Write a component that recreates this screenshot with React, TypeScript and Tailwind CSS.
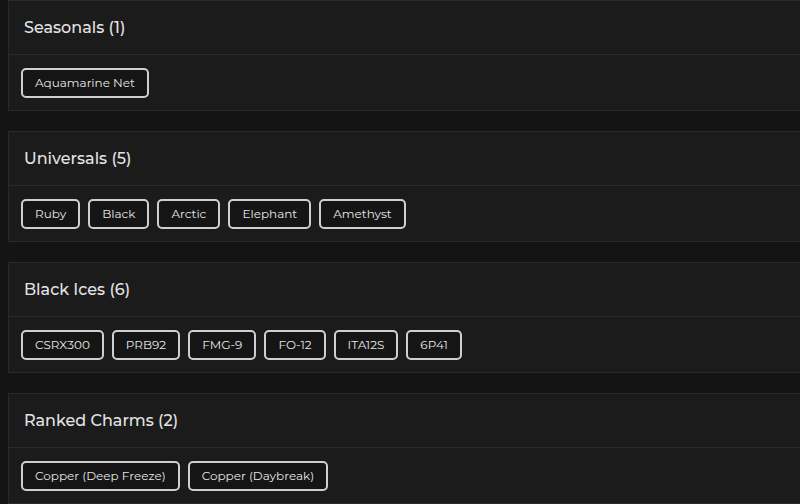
import React from "react";

const sections: { title: string; items: string[] }[] = [
  { title: "Seasonals (1)", items: ["Aquamarine Net"] },
  { title: "Universals (5)", items: ["Ruby", "Black", "Arctic", "Elephant", "Amethyst"] },
  { title: "Black Ices (6)", items: ["CSRX300", "PRB92", "FMG-9", "FO-12", "ITA12S", "6P41"] },
  { title: "Ranked Charms (2)", items: ["Copper (Deep Freeze)", "Copper (Daybreak)"] },
];

export default function App() {
  return (
    <div
      className="w-[800px] h-[504px] overflow-hidden bg-[#141414]"
      style={{ fontFamily: "Montserrat, 'Noto Sans', sans-serif" }}
    >
      <div className="ml-2 w-[820px] flex flex-col gap-5">
        {sections.map((s) => (
          <div key={s.title} className="h-[111px] border border-[#2a2a2a] bg-[#1b1b1b] flex flex-col">
            <div className="h-[54px] shrink-0 border-b border-[#2a2a2a] flex items-center pl-[15px] text-[16px] font-medium text-[#e4e4e4] leading-none">
              {s.title}
            </div>
            <div className="flex-1 flex items-center gap-2 pl-3">
              {s.items.map((it) => (
                <div
                  key={it}
                  className="h-[30px] flex items-center px-3 border-2 border-[#cfcfcf] rounded-[5px] bg-[#151515] text-[12px] text-[#e6e6e6] leading-none"
                >
                  {it}
                </div>
              ))}
            </div>
          </div>
        ))}
      </div>
    </div>
  );
}
